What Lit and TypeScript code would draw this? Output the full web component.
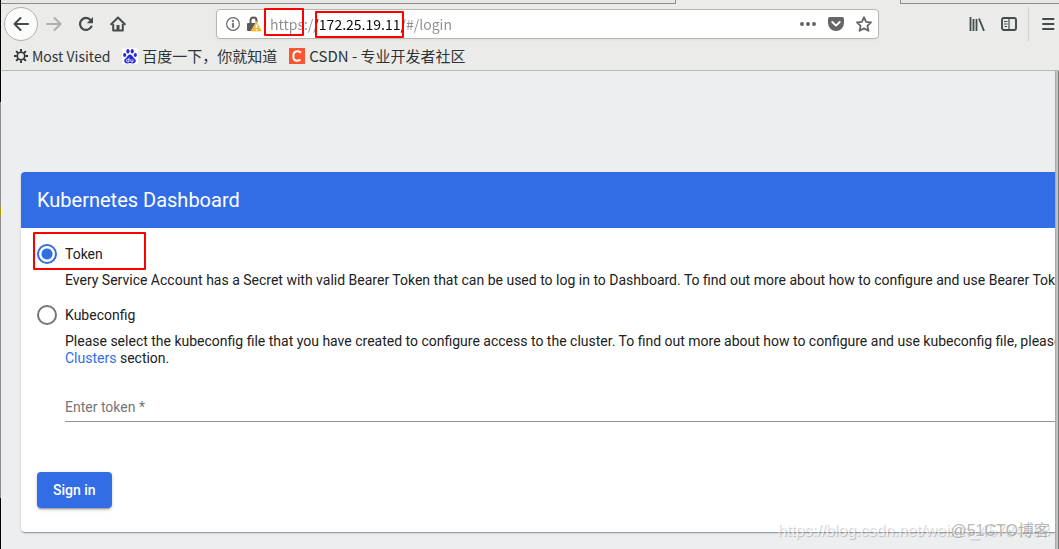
import { LitElement, html, css, svg } from "lit";
import { customElement, state } from "lit/decorators.js";

const icon = (body: unknown, size = 16) =>
  html`<svg width=${size} height=${size} viewBox="0 0 16 16" aria-hidden="true">${body}</svg>`;

const line = (d: string, w = 2) =>
  svg`<path d=${d} fill="none" stroke="currentColor" stroke-width=${w} stroke-linecap="round" stroke-linejoin="round"/>`;

const back = icon(line("M15 8H1.5M7.5 2 1.5 8l6 6"));
const forward = icon(line("M1 8h13.5M8.5 2l6 6-6 6"));
const reload = icon(svg`
  <path d="M13.4 10.6A6 6 0 1 1 12.6 4" fill="none" stroke="currentColor" stroke-width="2.2" stroke-linecap="round"/>
  <path d="M15 1v6.2H8.8z" fill="currentColor"/>`);
const home = icon(svg`
  <path d="M1.2 8.3 8 1.5l6.800 6.800" fill="none" stroke="currentColor" stroke-width="2" stroke-linecap="round" stroke-linejoin="round"/>
  <path d="M3.200 8v6.500h9.600V8" fill="none" stroke="currentColor" stroke-width="2" stroke-linejoin="round"/>
  <path d="M6.500 9h3v5.500h-3z" fill="currentColor"/>`);
const gear = icon(svg`
  <circle cx="8" cy="8" r="4.300" fill="none" stroke="currentColor" stroke-width="1.900"/>
  <path d="M8 0v3M8 13v3M0 8h3M13 8h3M2.400 2.400l2.200 2.200M11.400 11.400l2.200 2.200M2.400 13.600l2.200-2.200M11.400 4.600l2.200-2.200" stroke="currentColor" stroke-width="2.200"/>`, 14);
const baidu = icon(svg`
  <rect width="16" height="16" rx="1" fill="#fff"/>
  <g fill="#2529d8">
    <ellipse cx="2.700" cy="7" rx="1.600" ry="2.100"/><ellipse cx="5.900" cy="3.200" rx="1.600" ry="2.300"/>
    <ellipse cx="10.200" cy="3.200" rx="1.600" ry="2.300"/><ellipse cx="13.300" cy="7" rx="1.600" ry="2.100"/>
    <path d="M8 6.500c1.700 0 2.400 1.700 3.500 2.900 1.300 1.300 2.500 2 2.300 3.700-.2 1.800-1.500 2.300-2.900 2.300-1 0-2-.3-2.900-.3s-1.900.3-2.900.3c-1.400 0-2.700-.5-2.900-2.300-.2-1.700 1-2.400 2.300-3.700C5.600 8.200 6.300 6.500 8 6.500z"/>
  </g>
  <path d="M7 9.800v4H5.600a1.200 1.200 0 0 1 0-2.400H7M8.800 11.300v1.700c0 .6.300.8.900.8h1.200v-2.500" fill="none" stroke="#fff" stroke-width=".9"/>`);
const csdn = icon(svg`
  <rect width="16" height="16" fill="#fc5531"/>
  <path d="M12 4.700C11 3.700 9.900 3.300 8.700 3.300 6 3.300 4.300 5.400 4.300 8.200c0 2.700 1.500 4.500 4 4.500 1.300 0 2.300-.4 3.200-1.200" fill="none" stroke="#fff" stroke-width="2"/>`);
const info = icon(svg`
  <circle cx="8" cy="8" r="7.300" fill="none" stroke="currentColor" stroke-width="1.300"/>
  <circle cx="8" cy="4.700" r="1.200" fill="currentColor"/>
  <path d="M8 7.500v4" stroke="currentColor" stroke-width="2" stroke-linecap="round"/>`, 14);
const lock = icon(svg`
  <path d="M4.500 8V4.600a3 3 0 0 1 6 0V7" fill="none" stroke="#5a5a5a" stroke-width="2"/>
  <rect x="1" y="7" width="10" height="8" rx="1" fill="#5a5a5a"/>
  <path d="M10.500 5.600 15.600 14.600a.6.600 0 0 1-.5.900H5.900a.6.600 0 0 1-.5-.9z" fill="#fdb719" stroke="#f3f3f3" stroke-width=".5"/>
  <path d="M10.500 8.500v3.500M10.500 13.100v1.300" stroke="#fff" stroke-width="1.500"/>`);
const dots = icon(svg`<g fill="currentColor"><circle cx="2" cy="8" r="2"/><circle cx="8" cy="8" r="2"/><circle cx="14" cy="8" r="2"/></g>`);
const pocket = icon(svg`
  <path d="M1.800 1h12.400A1.800 1.800 0 0 1 16 2.800V7A8 8 0 0 1 0 7V2.800A1.800 1.800 0 0 1 1.800 1z" fill="currentColor"/>
  <path d="M4.300 6 8 9.600 11.700 6" fill="none" stroke="#fff" stroke-width="2" stroke-linecap="round" stroke-linejoin="round"/>`);
const star = icon(line("M8 1.200 10.100 5.800 15 6.400 11.400 9.800 12.400 14.800 8 12.400 3.600 14.800 4.600 9.800 1 6.400 5.900 5.800z", 1.8));
const library = icon(svg`<path d="M1.500 1v14M4.500 3v12M7.500 3v12M10 2.500l5 12.300" stroke="currentColor" stroke-width="1.800" fill="none"/>`);
const sidebar = icon(svg`
  <rect x="1" y="2" width="14" height="12" rx="2" fill="none" stroke="currentColor" stroke-width="1.900"/>
  <path d="M8 2v12" stroke="currentColor" stroke-width="1.200"/>
  <path d="M3 5.500h3.500M3 8h3.500M3.500 10.500h2.500" stroke="currentColor"/>`);
const menu = icon(svg`<path d="M3 3h10.500M3 8h10.500M3 13h10.500" stroke="currentColor" stroke-width="2" stroke-linecap="round"/>`);

@customElement("browser-chrome")
export class BrowserChrome extends LitElement {
  static styles = css`
    :host {
      display: block;
      color: #444b4d;
      background: #ebebe9;
      border-bottom: 1px solid #b6b6b3;
      font-family: "Noto Sans CJK SC", sans-serif;
    }
    svg { display: block; flex: none; }
    button {
      display: grid;
      place-items: center;
      flex: none;
      padding: 0;
      border: 0;
      background: none;
      color: inherit;
    }
    .tabs { display: flex; height: 4px; box-sizing: border-box; }
    .tab-rest { box-sizing: border-box; border-bottom: 1px solid #8d8f8c; background: #e7e7e5; }
    .before { flex: 675; border-right: 1px solid #8d8f8c; }
    .active { flex: 225; }
    .after { flex: 158; border-left: 1px solid #8d8f8c; }
    .toolbar { display: flex; align-items: center; height: 40px; }
    .nav { display: flex; align-items: center; gap: 16px; padding-left: 3px; }
    .round {
      width: 34px;
      height: 34px;
      box-sizing: border-box;
      border: 1px solid #b0b0ae;
      border-radius: 50%;
      background: #fbfbfb;
    }
    .off { color: #adb0ae; margin-left: -8px; }
    .address {
      position: relative;
      display: flex;
      align-items: center;
      flex: 1;
      min-width: 0;
      height: 30px;
      box-sizing: border-box;
      margin: 0 90px;
      padding: 0 6px 0 9px;
      border: 1px solid #b6b6b3;
      border-radius: 4px;
      background: #fff;
      box-shadow: 0 1px 3px #0000000d;
      color: #666;
    }
    .identity { display: flex; align-items: center; gap: 6px; margin-right: 8px; }
    .url {
      flex: 1;
      min-width: 0;
      height: 24px;
      padding: 0;
      border: 0;
      outline: 0;
      font: 14px/24px "Noto Sans CJK SC", sans-serif;
      color: transparent;
      background: linear-gradient(90deg, #8d8d8d 47px, #0c0c0d 47px 132px, #8d8d8d 132px);
      -webkit-background-clip: text;
      background-clip: text;
    }
    .actions { display: flex; gap: 12px; }
    .mark { position: absolute; box-sizing: border-box; border: 2px solid #f00; border-radius: 1px; pointer-events: none; }
    .scheme { left: 47px; top: -2px; width: 40px; height: 28px; }
    .host { left: 98px; top: 1px; width: 89px; height: 27px; }
    .tools { display: flex; align-items: center; gap: 16px; }
    .app-menu { height: 34px; padding: 0 3px 0 11px; margin-left: -5px; border-left: 1px solid #d0d0ce; }
    .bookmarks {
      display: flex;
      align-items: center;
      gap: 12px;
      height: 26px;
      box-sizing: border-box;
      padding: 0 0 2px 13px;
    }
    .bookmarks a {
      display: flex;
      align-items: center;
      gap: 4px;
      color: #2e3436;
      font-size: 15px;
      line-height: 24px;
      text-decoration: none;
      white-space: nowrap;
    }
    .bookmarks .folder { font-size: 14px; }
  `;

  render() {
    return html`
      <div class="tabs">
        <div class="tab-rest before"></div>
        <div class="active"></div>
        <div class="tab-rest after"></div>
      </div>
      <div class="toolbar">
        <div class="nav">
          <button class="round" aria-label="Back">${back}</button>
          <button class="off" aria-label="Forward" disabled>${forward}</button>
          <button aria-label="Reload">${reload}</button>
          <button aria-label="Home">${home}</button>
        </div>
        <div class="address">
          <div class="identity">
            <button aria-label="Site information">${info}</button>
            <button aria-label="Connection">${lock}</button>
          </div>
          <input class="url" type="text" aria-label="Address" spellcheck="false" .value=${"https://172.25.19.11/#/login"} />
          <div class="actions">
            <button aria-label="Page actions">${dots}</button>
            <button aria-label="Save to Pocket">${pocket}</button>
            <button aria-label="Bookmark this page">${star}</button>
          </div>
          <div class="mark scheme"></div>
          <div class="mark host"></div>
        </div>
        <div class="tools">
          <button aria-label="Library">${library}</button>
          <button aria-label="Sidebars">${sidebar}</button>
          <button class="app-menu" aria-label="Menu">${menu}</button>
        </div>
      </div>
      <nav class="bookmarks">
        <a class="folder" href="#">${gear}<span>Most Visited</span></a>
        <a href="#">${baidu}<span>百度一下，你就知道</span></a>
        <a href="#">${csdn}<span>CSDN - 专业开发者社区</span></a>
      </nav>
    `;
  }
}

@customElement("login-card")
export class LoginCard extends LitElement {
  static styles = css`
    :host {
      display: block;
      border-radius: 4px;
      background: #fff;
      box-shadow: 0 2px 1px -1px #0003, 0 1px 1px #00000024, 0 1px 3px #0000001f;
      color: #212121;
      font: 14px/17px Roboto, sans-serif;
      white-space: nowrap;
    }
    .title {
      margin: 0;
      padding: 16px;
      border-radius: 4px 4px 0 0;
      background: #326de6;
      color: #fff;
      font-size: 20px;
      font-weight: 400;
      line-height: 24px;
    }
    form { padding: 14px 16px 24px; }
    .choice { position: relative; display: flex; align-items: center; gap: 8px; width: fit-content; height: 24px; }
    .choice input {
      appearance: none;
      width: 20px;
      height: 20px;
      margin: 0;
      border: 2px solid #757575;
      border-radius: 50%;
    }
    .choice input:checked {
      border-color: #326de6;
      background: radial-gradient(circle, #326de6 5px, transparent 6px);
    }
    .mark {
      position: absolute;
      left: -4px;
      top: -10px;
      width: 113px;
      height: 38px;
      box-sizing: border-box;
      border: 2px solid #f00;
      border-radius: 1px;
      pointer-events: none;
    }
    p { margin: 6px 0 14px 28px; }
    a { color: #326de6; text-decoration: none; }
    .token {
      display: block;
      width: calc(100% - 28px);
      height: 25px;
      box-sizing: border-box;
      margin: 30px 0 50px 28px;
      padding: 0 0 4px;
      border: 0;
      border-bottom: 1px solid #949494;
      border-radius: 0;
      outline: 0;
      background: none;
      font: inherit;
    }
    .token::placeholder { color: #757575; opacity: 1; }
    .submit {
      height: 36px;
      padding: 0 16px;
      border: 0;
      border-radius: 4px;
      background: #326de6;
      box-shadow: 0 3px 1px -2px #0003, 0 2px 2px #00000024, 0 1px 5px #0000001f;
      color: #fff;
      font: 500 14px/36px Roboto, sans-serif;
      display: block;
    }
  `;

  @state() private mode = "token";

  private pick(e: Event) {
    this.mode = (e.target as HTMLInputElement).value;
  }

  render() {
    return html`
      <h1 class="title">Kubernetes Dashboard</h1>
      <form @submit=${(e: Event) => e.preventDefault()}>
        <label class="choice">
          <input type="radio" name="mode" value="token" .checked=${this.mode === "token"} @change=${this.pick} />
          <span>Token</span>
          <span class="mark"></span>
        </label>
        <p>Every Service Account has a Secret with valid Bearer Token that can be used to log in to Dashboard. To find out more about how to configure and use Bearer Token</p>
        <label class="choice">
          <input type="radio" name="mode" value="kubeconfig" .checked=${this.mode === "kubeconfig"} @change=${this.pick} />
          <span>Kubeconfig</span>
        </label>
        <p>Please select the kubeconfig file that you have created to configure access to the cluster. To find out more about how to configure and use kubeconfig file, please<br /><a href="#">Clusters</a> section.</p>
        <input class="token" type="text" aria-label="Enter token" placeholder="Enter token *" required />
        <button class="submit" type="submit">Sign in</button>
      </form>
    `;
  }
}

@customElement("app-root")
export class AppRoot extends LitElement {
  static styles = css`
    :host {
      position: relative;
      display: grid;
      grid-template-columns: 1px minmax(0, 1fr);
      min-height: 100vh;
      overflow: hidden;
    }
    .edge {
      background: linear-gradient(#000 102px, #8e8e90 102px 207px, #b59a00 207px 216px, #8e8e90 216px 498px, #000 498px);
    }
    .window { display: flex; flex-direction: column; min-width: 0; }
    .view { display: flex; flex: 1; min-width: 0; background: #edeef0; }
    .page { flex: 1; min-width: 0; overflow: hidden; padding: 101px 0 17px 20px; }
    .page login-card { margin-right: -24px; }
    .scroll { flex: none; width: 4px; box-sizing: border-box; border-left: 1px solid #a9aaa8; border-right: 1px solid #7b7e7d; background: #c1c2c0; }
    .stamp {
      position: absolute;
      right: 9px;
      bottom: 6px;
      font: 16px/24px "Liberation Sans", "Noto Sans CJK SC", sans-serif;
      color: #8c8c8c99;
      text-shadow: 1px 1px 0 #ffffff80;
      pointer-events: none;
    }
    .faint { color: #ffffffb3; text-shadow: 1px 1px 1px #00000038; }
  `;

  render() {
    return html`
      <div class="edge"></div>
      <div class="window">
        <browser-chrome></browser-chrome>
        <div class="view">
          <main class="page"><login-card></login-card></main>
          <div class="scroll"></div>
        </div>
      </div>
      <div class="stamp faint">https://blog.csdn.net/weixin_45784983</div>
      <div class="stamp">@51CTO博客</div>
    `;
  }
}
